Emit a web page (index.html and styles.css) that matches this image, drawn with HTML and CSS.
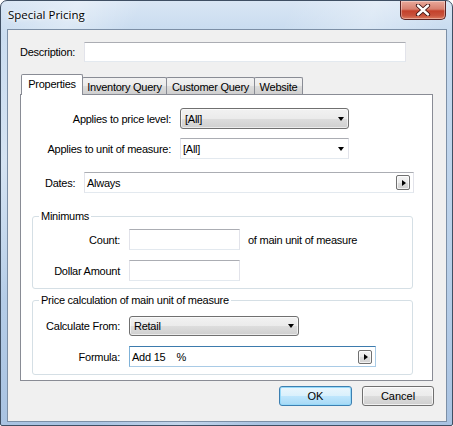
FILE: index.html
```html
<!DOCTYPE html>
<html>
<head>
<meta charset="utf-8">
<link rel="stylesheet" href="styles.css">
</head>
<body>
<div class="window">
  <div class="titlebar">
    <span class="title">Special Pricing</span>
    <div class="close">
      <svg width="16" height="12" viewBox="0 0 16 12">
        <path d="M3 1.5 L13 10.5 M13 1.5 L3 10.5" stroke="#3a1010" stroke-width="4.2" stroke-linecap="round"/>
        <path d="M3 1.5 L13 10.5 M13 1.5 L3 10.5" stroke="#ffffff" stroke-width="2.4" stroke-linecap="round"/>
      </svg>
    </div>
  </div>
  <div class="client">
    <div class="desc-row">
      <span class="desc-label">Description:</span>
      <div class="textbox desc-box"></div>
    </div>
    <div class="tabs">
      <div class="tab active t1">Properties</div>
      <div class="tab t2">Inventory Query</div>
      <div class="tab t3">Customer Query</div>
      <div class="tab t4">Website</div>
    </div>
    <div class="panel">
      <div class="row r1">
        <span class="lbl lbl-wide">Applies to price level:</span>
        <div class="dropdown dd-wide"><span class="dd-text">[All]</span><span class="arrow-down"></span></div>
      </div>
      <div class="row r2">
        <span class="lbl lbl-wide">Applies to unit of measure:</span>
        <div class="combo dd-wide"><span class="combo-text">[All]</span><span class="arrow-down"></span></div>
      </div>
      <div class="row r3">
        <span class="lbl lbl-dates">Dates:</span>
        <div class="textbox dates-box"><span class="tb-text">Always</span><span class="mini-btn"><span class="arrow-right"></span></span></div>
      </div>
      <fieldset class="group g1">
        <legend>Minimums</legend>
        <div class="row grow first">
          <span class="lbl lbl-g">Count:</span>
          <div class="textbox small-box"></div>
          <span class="after">of main unit of measure</span>
        </div>
        <div class="row grow second">
          <span class="lbl lbl-g">Dollar Amount</span>
          <div class="textbox small-box"></div>
        </div>
      </fieldset>
      <fieldset class="group g2">
        <legend>Price calculation of main unit of measure</legend>
        <div class="row grow first calc">
          <span class="lbl lbl-g">Calculate From:</span>
          <div class="dropdown dd-calc"><span class="dd-text">Retail</span><span class="arrow-down"></span></div>
        </div>
        <div class="row grow second">
          <span class="lbl lbl-g">Formula:</span>
          <div class="textbox focused formula-box"><span class="tb-text formula-text">Add 15    %</span><span class="mini-btn mb-f"><span class="arrow-right"></span></span></div>
        </div>
      </fieldset>
    </div>
    <div class="buttons">
      <div class="btn default">OK</div>
      <div class="btn cancel">Cancel</div>
    </div>
  </div>
</div>
</body>
</html>
```
FILE: styles.css
```css
html, body {
  margin: 0;
  padding: 0;
  background: #ffffff;
}
body {
  width: 453px;
  height: 426px;
  overflow: hidden;
  font-family: "Liberation Sans", Arial, sans-serif;
  font-size: 11px;
  letter-spacing: -0.25px;
  color: #000;
}
.window {
  width: 453px;
  height: 426px;
  box-sizing: border-box;
  border: 1px solid #3f4f63;
  border-radius: 7px 7px 2px 2px;
  background:
    linear-gradient(115deg, rgba(255,255,255,0) 0%, rgba(255,255,255,0.35) 12%, rgba(255,255,255,0) 22%, rgba(255,255,255,0) 45%, rgba(255,255,255,0.3) 58%, rgba(255,255,255,0) 70%),
    linear-gradient(#d9e6f4 0%, #c6daef 8%, #b9d0e9 60%, #a9c3e2 100%);
  display: flex;
  flex-direction: column;
}
.titlebar {
  height: 28px;
  display: flex;
  align-items: flex-start;
}
.title {
  font-family: "Open Sans", "Noto Sans", sans-serif;
  font-size: 11.5px;
  letter-spacing: 0;
  margin-left: 7px;
  margin-top: 6px;
  color: #000;
  text-shadow: 0 0 6px #ffffff, 0 0 3px #ffffff;
}
.close {
  margin-left: auto;
  margin-right: 6px;
  width: 46px;
  height: 19px;
  box-sizing: border-box;
  border: 1px solid #5a2222;
  border-top: none;
  border-radius: 0 0 5px 5px;
  background: linear-gradient(#e9a99b 0%, #d7806f 45%, #c4412b 55%, #c8523c 80%, #dd7a5e 100%);
  box-shadow: inset 0 0 0 1px rgba(255,255,255,0.35);
  display: flex;
  align-items: center;
  justify-content: center;
}
.client {
  margin: 0 6px 0 6px;
  width: 440px;
  height: 393px;
  box-sizing: border-box;
  border: 1px solid #7c8fa6;
  background: #f0f0f0;
  display: flex;
  flex-direction: column;
}
.desc-row {
  margin-top: 12px;
  margin-left: 12px;
  display: flex;
  align-items: center;
  height: 20px;
}
.desc-label {
  width: 64px;
}
.textbox {
  box-sizing: border-box;
  background: #fff;
  border: 1px solid #e2e3ea;
  border-top-color: #abadb3;
  border-bottom-color: #e3e9ef;
  display: flex;
  align-items: center;
}
.desc-box {
  width: 322px;
  height: 20px;
}
.tabs {
  margin-top: 12px;
  margin-left: 13px;
  height: 20px;
  display: flex;
  align-items: flex-end;
}
.tab {
  box-sizing: border-box;
  height: 17px;
  border: 1px solid #898c95;
  border-bottom: none;
  border-radius: 2px 2px 0 0;
  background: linear-gradient(#f2f2f2 0%, #ebebeb 50%, #dddddd 51%, #cfcfcf 100%);
  display: flex;
  align-items: center;
  justify-content: center;
  margin-left: -1px;
  padding-top: 1px;
}
.tab.t1 { width: 62px; margin-left: 0; }
.tab.t2 { width: 85px; }
.tab.t3 { width: 89px; }
.tab.t4 { width: 49px; }
.tab.active {
  height: 21px;
  margin-bottom: -1px;
  background: #ffffff;
  z-index: 2;
  padding-top: 0;
  padding-bottom: 3px;
  position: relative;
}
.panel {
  margin-left: 12px;
  width: 413px;
  height: 287px;
  box-sizing: border-box;
  border: 1px solid #898c95;
  background: #ffffff;
  padding-top: 13px;
  padding-left: 0;
  display: flex;
  flex-direction: column;
}
.row {
  display: flex;
  align-items: center;
  height: 21px;
  flex-shrink: 0;
}
.r2 { margin-top: 9px; }
.r3 { margin-top: 13px; }
.lbl { flex-shrink: 0; }
.lbl-wide {
  width: 150px;
  text-align: right;
  margin-right: 9px;
}
.lbl-dates {
  width: 39px;
  padding-left: 24px;
}
.dropdown {
  box-sizing: border-box;
  height: 21px;
  border: 1px solid #707070;
  border-radius: 3px;
  background: linear-gradient(#f2f2f2 0%, #ebebeb 50%, #dddddd 51%, #cfcfcf 100%);
  display: flex;
  align-items: center;
  box-shadow: inset 0 0 0 1px rgba(255,255,255,0.6);
}
.combo {
  box-sizing: border-box;
  height: 21px;
  background: #fff;
  border: 1px solid #e2e3ea;
  border-top-color: #abadb3;
  border-bottom-color: #e3e9ef;
  display: flex;
  align-items: center;
}
.dd-wide { width: 169px; }
.dd-calc { width: 170px; height: 20px; }
.dd-text { padding-left: 4px; flex: 1; }
.combo-text { padding-left: 2px; flex: 1; }
.arrow-down {
  width: 0;
  height: 0;
  border-left: 3.5px solid transparent;
  border-right: 3.5px solid transparent;
  border-top: 4px solid #000;
  margin-right: 4px;
}
.dates-box {
  width: 330px;
  height: 21px;
}
.tb-text { padding-left: 2px; flex: 1; white-space: pre; }
.mini-btn {
  box-sizing: border-box;
  width: 14px;
  height: 15px;
  border: 1px solid #707070;
  border-radius: 2px;
  background: linear-gradient(#f4f4f4 0%, #ebebeb 50%, #dddddd 51%, #d2d2d2 100%);
  display: flex;
  align-items: center;
  justify-content: center;
  margin-right: 3px;
  box-shadow: inset 0 0 0 1px rgba(255,255,255,0.7);
}
.mb-f { height: 14px; margin-right: 3px; }
.arrow-right {
  width: 0;
  height: 0;
  border-top: 3.5px solid transparent;
  border-bottom: 3.5px solid transparent;
  border-left: 4px solid #000;
  margin-left: 1px;
}
.group {
  margin: 0 0 0 11px;
  padding: 0 0 7px 0;
  width: 381px;
  box-sizing: border-box;
  border: 1px solid #d5dfe5;
  border-radius: 3px;
}
.g1 { margin-top: 17px; }
.g2 { margin-top: 5px; }
.group legend {
  margin-left: 6px;
  padding: 0 2px;
  line-height: 13px;
  height: 13px;
}
.grow.first { margin-top: 6px; }
.grow.calc { height: 20px; margin-top: 9px; }
.grow.second { margin-top: 10px; }
.lbl-g {
  width: 87px;
  text-align: right;
  margin-right: 9px;
}
.small-box {
  width: 111px;
  height: 21px;
}
.after { margin-left: 8px; }
.formula-box {
  width: 247px;
  height: 21px;
}
.textbox.focused {
  border-color: #a9cbe6;
  border-top-color: #3d7bad;
  border-left-color: #7fb2d8;
  border-right-color: #a9cbe6;
}
.buttons {
  margin-top: 5px;
  display: flex;
  justify-content: flex-end;
  margin-right: 12px;
}
.btn {
  box-sizing: border-box;
  height: 20px;
  border-radius: 3px;
  display: flex;
  align-items: center;
  justify-content: center;
  letter-spacing: 0;
}
.btn.default {
  width: 73px;
  border: 1px solid #3c7fb1;
  background: linear-gradient(#eaf6fd 0%, #d9f0fc 50%, #bee6fd 51%, #a7d9f5 100%);
  box-shadow: inset 0 0 0 1px #96d9f9;
  margin-right: 10px;
}
.btn.cancel {
  width: 72px;
  border: 1px solid #707070;
  background: linear-gradient(#f2f2f2 0%, #ebebeb 50%, #dddddd 51%, #cfcfcf 100%);
  box-shadow: inset 0 0 0 1px rgba(255,255,255,0.7);
}
```
